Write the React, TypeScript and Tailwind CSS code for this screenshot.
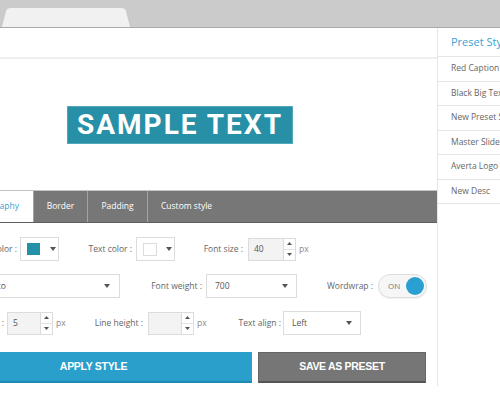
import React from "react";

const OS = { fontFamily: '"Open Sans", "Liberation Sans", sans-serif' };

function Caret() {
  return (
    <svg width="6" height="4" viewBox="0 0 6 4" className="shrink-0">
      <path d="M0 0 L6 0 L3 4 Z" fill="#555" />
    </svg>
  );
}

function Spin({ value, w }: { value: string; w: string }) {
  return (
    <div className={`flex h-[23px] ${w} border border-[#dcdcdc] bg-[#f3f3f3]`}>
      <div className="flex-1 flex items-center pl-[5px] text-[8.5px] text-[#555]">{value}</div>
      <div className="w-[12px] flex flex-col border-l border-[#dcdcdc] bg-white">
        <div className="flex-1 flex items-center justify-center border-b border-[#e4e4e4]">
          <svg width="5" height="3" viewBox="0 0 5 3"><path d="M0 3 L5 3 L2.5 0 Z" fill="#555" /></svg>
        </div>
        <div className="flex-1 flex items-center justify-center">
          <svg width="5" height="3" viewBox="0 0 5 3"><path d="M0 0 L5 0 L2.5 3 Z" fill="#555" /></svg>
        </div>
      </div>
    </div>
  );
}

function Label({ w, children }: { w: string; children: React.ReactNode }) {
  return <span className={`${w} shrink-0 text-right whitespace-nowrap text-[8.5px] text-[#666]`}>{children}</span>;
}

export default function App() {
  const presets = ["Red Caption", "Black Big Text", "New Preset Style", "Master Slider", "Averta Logo", "New Desc"];
  return (
    <div className="w-[500px] h-[393px] overflow-hidden bg-white relative" style={OS}>
      {/* browser-like top bar */}
      <div className="h-[28px] bg-[#cbcbcb] border-b border-[#a9a9a9] relative">
        <svg width="140" height="27" viewBox="0 0 140 27" className="absolute left-0 top-0">
          <path d="M2 27 L6.2 10.5 Q7 8 10 8 L122 8 Q125 8 125.8 10.5 L130 27 Z" fill="#f1f1f1" />
        </svg>
      </div>

      <div className="flex h-[359px]">
        {/* main panel */}
        <div className="ml-[-77px] w-[514px] shrink-0 flex flex-col">
          <div className="h-[31px] border-b-2 border-[#efefef]" />
          <div className="h-[131px] flex items-center justify-center">
            <div
              className="h-[38px] w-[226px] flex items-center justify-center bg-[#2790a7] border border-[#52a7ba] text-white font-bold text-[28px] tracking-[2px]"
              style={{ fontFamily: 'Roboto, "Liberation Sans", sans-serif' }}
            >
              SAMPLE TEXT
            </div>
          </div>

          {/* tabs */}
          <div className="h-[33px] flex bg-[#777] border-t border-[#c4c4c4] border-b border-b-[#5e5e5e] text-[8.5px]">
            <div className="w-[110px] bg-white flex items-center justify-end pr-[14px] text-[#3a9fd0]">Typography</div>
            <div className="w-[54px] flex items-center justify-center text-white border-l border-[#a3a3a3]">Border</div>
            <div className="w-[60px] flex items-center justify-center text-white border-l border-[#a3a3a3]">Padding</div>
            <div className="pl-[13px] pr-[13px] flex items-center text-white border-l border-[#a3a3a3]">Custom style</div>
          </div>

          {/* form */}
          <div className="flex flex-col pt-[14px]">
            {/* row 1 */}
            <div className="flex items-center h-[24px]">
              <Label w="w-[94px]">Background color :</Label>
              <div className="ml-[3px] w-[39px] h-[24px] border border-[#dcdcdc] bg-white flex items-center pl-[6px]">
                <div className="w-[13px] h-[12px] bg-[#2591a8]" />
                <div className="ml-[10px]"><Caret /></div>
              </div>
              <Label w="w-[73px]">Text color :</Label>
              <div className="ml-[4px] w-[39px] h-[24px] border border-[#dcdcdc] bg-white flex items-center pl-[6px]">
                <div className="w-[14px] h-[13px] bg-white border border-[#dcdcdc]" />
                <div className="ml-[9px]"><Caret /></div>
              </div>
              <Label w="w-[68px]">Font size :</Label>
              <div className="ml-[5px]"><Spin value="40" w="w-[48px]" /></div>
              <span className="ml-[3px] text-[8.5px] text-[#888]">px</span>
            </div>

            {/* row 2 */}
            <div className="flex items-center h-[24px] mt-[13px]">
              <div className="ml-[45px] w-[152px] h-[24px] border border-[#dcdcdc] bg-white flex items-center justify-between pl-[8px] pr-[9px] text-[8.5px] text-[#555]">
                <span>Roboto</span>
                <Caret />
              </div>
              <Label w="w-[82px]">Font weight :</Label>
              <div className="ml-[4px] w-[91px] h-[24px] border border-[#dcdcdc] bg-white flex items-center justify-between pl-[8px] pr-[8px] text-[8.5px] text-[#555]">
                <span>700</span>
                <Caret />
              </div>
              <Label w="w-[76px]">Wordwrap :</Label>
              <div className="ml-[5px] w-[49px] h-[24px] rounded-full border border-[#dedede] bg-[#f6f6f6] flex items-center justify-between pl-[9px] pr-[2px] shadow-[0_1px_1px_rgba(0,0,0,0.06)]">
                <span className="text-[8px] text-[#777]">ON</span>
                <div className="w-[18px] h-[18px] rounded-full bg-[#2a9fd2]" />
              </div>
            </div>

            {/* row 3 */}
            <div className="flex items-center h-[24px] mt-[13px]">
              <Label w="w-[81px]">Letter spacing :</Label>
              <div className="ml-[3px]"><Spin value="5" w="w-[46px]" /></div>
              <span className="ml-[3px] w-[14px] text-[8.5px] text-[#888]">px</span>
              <Label w="w-[73px]">Line height :</Label>
              <div className="ml-[5px]"><Spin value="" w="w-[46px]" /></div>
              <span className="ml-[3px] w-[14px] text-[8.5px] text-[#888]">px</span>
              <Label w="w-[70px]">Text align :</Label>
              <div className="ml-[2px] w-[78px] h-[24px] border border-[#dcdcdc] bg-white flex items-center justify-between pl-[8px] pr-[8px] text-[8.5px] text-[#555]">
                <span>Left</span>
                <Caret />
              </div>
            </div>

            {/* buttons */}
            <div className="flex mt-[17px] pl-[12px] gap-[6px]" style={{ fontFamily: '"Liberation Sans", Arial, sans-serif' }}>
              <div className="w-[317px] h-[31px] bg-[#2b9fcc] border-b-2 border-[#1f88b5] flex items-center justify-center text-white font-bold text-[10.5px] tracking-[-0.3px]">
                APPLY STYLE
              </div>
              <div className="w-[168px] h-[31px] bg-[#767676] border border-[#666] border-b-2 border-b-[#555] flex items-center justify-center text-white font-bold text-[10.5px] tracking-[-0.3px]">
                SAVE AS PRESET
              </div>
            </div>
          </div>
        </div>

        {/* right panel */}
        <div className="w-[130px] shrink-0 border-l border-[#e6e6e6] h-[358px] flex flex-col">
          <div className="h-[29px] border-b border-[#e6e6e6] flex items-center pl-[13px] text-[11px] text-[#3aa3d6] whitespace-nowrap">
            Preset Styles
          </div>
          {presets.map((p) => (
            <div key={p} className="h-[24.5px] border-b border-[#e6e6e6] flex items-center pl-[13px] text-[8.5px] text-[#666] whitespace-nowrap">
              {p}
            </div>
          ))}
        </div>
      </div>
    </div>
  );
}
